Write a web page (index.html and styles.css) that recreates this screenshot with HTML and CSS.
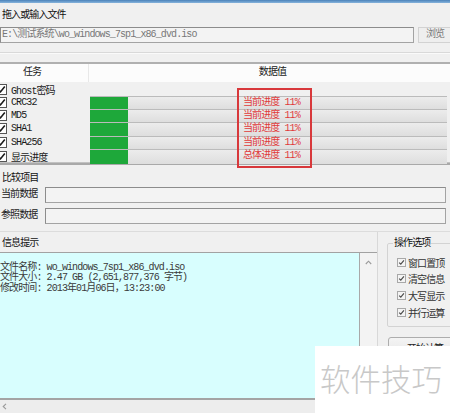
FILE: index.html
```html
<!DOCTYPE html>
<html lang="zh-CN">
<head>
<meta charset="utf-8">
<title>文件校验</title>
<link rel="stylesheet" href="styles.css">
</head>
<body>
<div class="window">
  <div class="titlebar"></div>

  <section class="file-section">
    <div class="section-title">拖入或输入文件</div>
    <div class="file-row">
      <div class="field path">E:\测试系统\wo_windows_7sp1_x86_dvd.iso</div>
      <button class="btn browse" type="button">浏览</button>
    </div>
  </section>

  <div class="task-table">
    <div class="thead">
      <div class="th task-col">任务</div>
      <div class="th value-col">数据值</div>
    </div>
    <div class="tbody">
      <div class="row first">
        <div class="task"><span class="chk"><svg viewBox="0 0 9 9"><path d="M1.3 4.6 L3.5 6.8 L7.8 1.6"/></svg></span>Ghost密码</div>
        <div class="value"></div>
      </div>
      <div class="row">
        <div class="task"><span class="chk"><svg viewBox="0 0 9 9"><path d="M1.3 4.6 L3.5 6.8 L7.8 1.6"/></svg></span>CRC32</div>
        <div class="value"><div class="track"><div class="fill"></div><div class="status">当前进度 11%</div></div></div>
      </div>
      <div class="row">
        <div class="task"><span class="chk"><svg viewBox="0 0 9 9"><path d="M1.3 4.6 L3.5 6.8 L7.8 1.6"/></svg></span>MD5</div>
        <div class="value"><div class="track"><div class="fill"></div><div class="status">当前进度 11%</div></div></div>
      </div>
      <div class="row">
        <div class="task"><span class="chk"><svg viewBox="0 0 9 9"><path d="M1.3 4.6 L3.5 6.8 L7.8 1.6"/></svg></span>SHA1</div>
        <div class="value"><div class="track"><div class="fill"></div><div class="status">当前进度 11%</div></div></div>
      </div>
      <div class="row">
        <div class="task"><span class="chk"><svg viewBox="0 0 9 9"><path d="M1.3 4.6 L3.5 6.8 L7.8 1.6"/></svg></span>SHA256</div>
        <div class="value"><div class="track"><div class="fill"></div><div class="status">当前进度 11%</div></div></div>
      </div>
      <div class="row">
        <div class="task"><span class="chk"><svg viewBox="0 0 9 9"><path d="M1.3 4.6 L3.5 6.8 L7.8 1.6"/></svg></span>显示进度</div>
        <div class="value"><div class="track"><div class="fill"></div><div class="status">总体进度 11%</div></div></div>
      </div>
    </div>
    <div class="highlight"></div>
  </div>

  <section class="compare-section">
    <div class="section-title compare-title">比较项目</div>
    <div class="compare-row">
      <div class="row-label">当前数据</div>
      <div class="field"></div>
    </div>
    <div class="compare-row second">
      <div class="row-label">参照数据</div>
      <div class="field"></div>
    </div>
  </section>

  <section class="info-section">
    <div class="info-main">
      <div class="section-title info-title">信息提示</div>
      <div class="info-box">
        <div class="info-text">
          <div>文件名称: wo_windows_7sp1_x86_dvd.iso</div>
          <div>文件大小: 2.47 GB (2,651,877,376 字节)</div>
          <div>修改时间: 2013年01月06日，13:23:00</div>
        </div>
        <div class="vscroll"><svg class="arrow-up" viewBox="0 0 7 5"><path d="M0.8 4 L3.5 1.2 L6.2 4"/></svg></div>
      </div>
      <div class="hscroll"><svg class="arrow-left" viewBox="0 0 5 7"><path d="M4 0.8 L1.2 3.5 L4 6.2"/></svg></div>
    </div>

    <aside class="options">
      <fieldset class="group">
        <legend>操作选项</legend>
        <div class="opt"><span class="box"><svg viewBox="0 0 9 9"><path d="M1.5 4.6 L3.6 6.6 L7.6 1.8"/></svg></span>窗口置顶</div>
        <div class="opt"><span class="box"><svg viewBox="0 0 9 9"><path d="M1.5 4.6 L3.6 6.6 L7.6 1.8"/></svg></span>清空信息</div>
        <div class="opt"><span class="box"><svg viewBox="0 0 9 9"><path d="M1.5 4.6 L3.6 6.6 L7.6 1.8"/></svg></span>大写显示</div>
        <div class="opt"><span class="box"><svg viewBox="0 0 9 9"><path d="M1.5 4.6 L3.6 6.6 L7.6 1.8"/></svg></span>并行运算</div>
      </fieldset>
      <button class="btn start" type="button">开始计算</button>
    </aside>
  </section>

  <div class="watermark">软件技巧</div>
</div>
</body>
</html>
```

FILE: styles.css
```css
* {
  box-sizing: border-box;
}

html,
body {
  margin: 0;
  padding: 0;
}

body {
  width: 450px;
  height: 413px;
  overflow: hidden;
  background: #f0f0f0;
  font-family: "Liberation Mono", "Noto Sans CJK SC", monospace;
  font-size: 10px;
  letter-spacing: -0.9px;
  color: #1a1a1a;
}

.window {
  position: relative;
  height: 413px;
  display: flex;
  flex-direction: column;
}

.titlebar {
  flex: none;
  height: 3px;
  background: linear-gradient(#4b82ba, #86b4dc);
}

/* section headings */
.section-title {
  height: 24px;
  padding: 6px 0 0 2px;
  line-height: 14px;
  color: #111;
}

/* file path row */
.file-section {
  flex: none;
  padding-bottom: 9px;
  border-bottom: 1px solid #d9d9d9;
  box-shadow: 0 1px 0 #fafafa;
}

.file-row {
  display: flex;
  gap: 4px;
  height: 16px;
}

.field {
  border: 1px solid #a3a3a3;
  border-top-color: #8c8c8c;
  border-left-color: #8c8c8c;
  background: #f3f3f3;
  line-height: 14px;
  padding-left: 1px;
  color: #777;
  white-space: nowrap;
  overflow: hidden;
}

.field.path {
  width: 414px;
}

.btn {
  font: inherit;
  letter-spacing: inherit;
  padding: 0;
  border: 1px solid #d2d2d2;
  background: #eeeeee;
  color: #7a7a7a;
  line-height: 14px;
}

.browse {
  width: 34px;
  margin-right: -2px;
}

/* task list */
.task-table {
  position: relative;
  flex: none;
  margin-top: 9px;
  border-top: 2px solid #b0b0b0;
  border-bottom: 2px solid #a9a9a9;
}

.thead {
  display: grid;
  grid-template-columns: 89px 1fr;
  height: 18px;
  background: #fcfcfc;
  line-height: 18px;
  color: #1a1a1a;
}

.th {
  text-align: center;
}

.th.task-col {
  padding-right: 24px;
  border-right: 1px solid #e8e8e8;
}

.th.value-col {
  padding-left: 6px;
}

.tbody {
  background: #f0f0f0;
  border-bottom: 1px solid #c2c2c2;
}

.row {
  display: grid;
  grid-template-columns: 90px 1fr;
  height: 13.2px;
}

.row.first {
  height: 14px;
}

.task {
  display: flex;
  align-items: center;
  gap: 4px;
  white-space: nowrap;
}

.chk {
  flex: none;
  width: 11px;
  height: 11px;
  margin-left: -4px;
  border: 1px solid #555;
  background: #fff;
  display: flex;
}

.chk svg {
  width: 9px;
  height: 9px;
}

.chk path {
  fill: none;
  stroke: #1a1a1a;
  stroke-width: 1.6;
}

.value {
  padding-right: 3px;
}

.track {
  display: grid;
  height: 100%;
  border-top: 1px solid #bbbbbb;
  background: linear-gradient(#ececec, #dedede);
}

.fill {
  grid-area: 1 / 1;
  width: 38px;
  background: #1ea83a;
}

.status {
  grid-area: 1 / 1;
  padding-left: 153px;
  line-height: 12px;
  color: #e03a3a;
  white-space: nowrap;
}

.highlight {
  position: absolute;
  left: 237px;
  top: 24px;
  width: 75px;
  height: 80px;
  border: 2px solid #d8383b;
}

/* compare fields */
.compare-section {
  flex: none;
  padding-bottom: 7px;
  border-bottom: 1px solid #dcdcdc;
}

.compare-title {
  height: 22px;
  padding-top: 7px;
}

.compare-row {
  display: grid;
  grid-template-columns: 45px 1fr;
  height: 16px;
  margin-right: 4px;
}

.compare-row.second {
  margin-top: 5px;
}

.row-label {
  padding-left: 1px;
  line-height: 16px;
  white-space: nowrap;
}

/* info area */
.info-section {
  flex: 1;
  display: grid;
  grid-template-columns: 378px 72px;
  min-height: 0;
}

.info-main {
  display: flex;
  flex-direction: column;
  border-right: 1px solid #d8d8d8;
}

.info-title {
  height: 20px;
  padding-top: 5px;
}

.info-box {
  display: grid;
  grid-template-columns: 360px 1fr;
  height: 148px;
  border-top: 1px solid #a2a2a2;
  border-bottom: 2px solid #a4a4a4;
}

.info-text {
  background: #d8fefe;
  border-right: 1px solid #a8a8a8;
  padding-top: 10px;
  line-height: 10.5px;
  color: #3a3a3a;
  white-space: nowrap;
}

.vscroll {
  background: #f3f3f3;
  display: flex;
  justify-content: center;
  padding-top: 7px;
}

.arrow-up {
  width: 7px;
  height: 5px;
}

.arrow-up path,
.arrow-left path {
  fill: none;
  stroke: #9a9a9a;
  stroke-width: 1.1;
}

.hscroll {
  flex: 1;
  background: #ededed;
  display: flex;
  align-items: center;
  padding-left: 2px;
}

.arrow-left {
  width: 5px;
  height: 7px;
}

/* options panel */
.options {
  display: flex;
  flex-direction: column;
  min-width: 0;
}

.group {
  margin: 5px -10px 0 9px;
  padding: 3px 0 5px 5px;
  border: 1px solid #d3d3d3;
  border-radius: 2px;
  min-width: 0;
}

.group legend {
  padding: 0 1px;
  line-height: 14px;
  color: #111;
  white-space: nowrap;
}

.opt {
  display: flex;
  align-items: center;
  gap: 2px;
  height: 16.7px;
  padding-left: 4px;
  color: #333;
  white-space: nowrap;
}

.box {
  flex: none;
  width: 9px;
  height: 9px;
  border: 1px solid #a8a8a8;
  background: #f4f4f4;
  display: flex;
}

.box svg {
  width: 7px;
  height: 7px;
}

.box path {
  fill: none;
  stroke: #4a4a4a;
  stroke-width: 1.5;
}

.start {
  height: 26px;
  margin: 10px -12px 0 10px;
  border: 1px solid #adadad;
  border-radius: 3px;
  background: linear-gradient(#f4f4f4, #e2e2e2);
  color: #222;
  line-height: 24px;
}

/* corner watermark over the window */
.watermark {
  position: absolute;
  left: 315px;
  top: 346px;
  width: 135px;
  height: 67px;
  background: #ffffff;
  padding: 16px 0 0 5px;
  font-family: "Noto Sans CJK SC", sans-serif;
  font-size: 30.5px;
  font-weight: 300;
  line-height: 32px;
  letter-spacing: 0;
  color: #c8c8c8;
  white-space: nowrap;
}
```
